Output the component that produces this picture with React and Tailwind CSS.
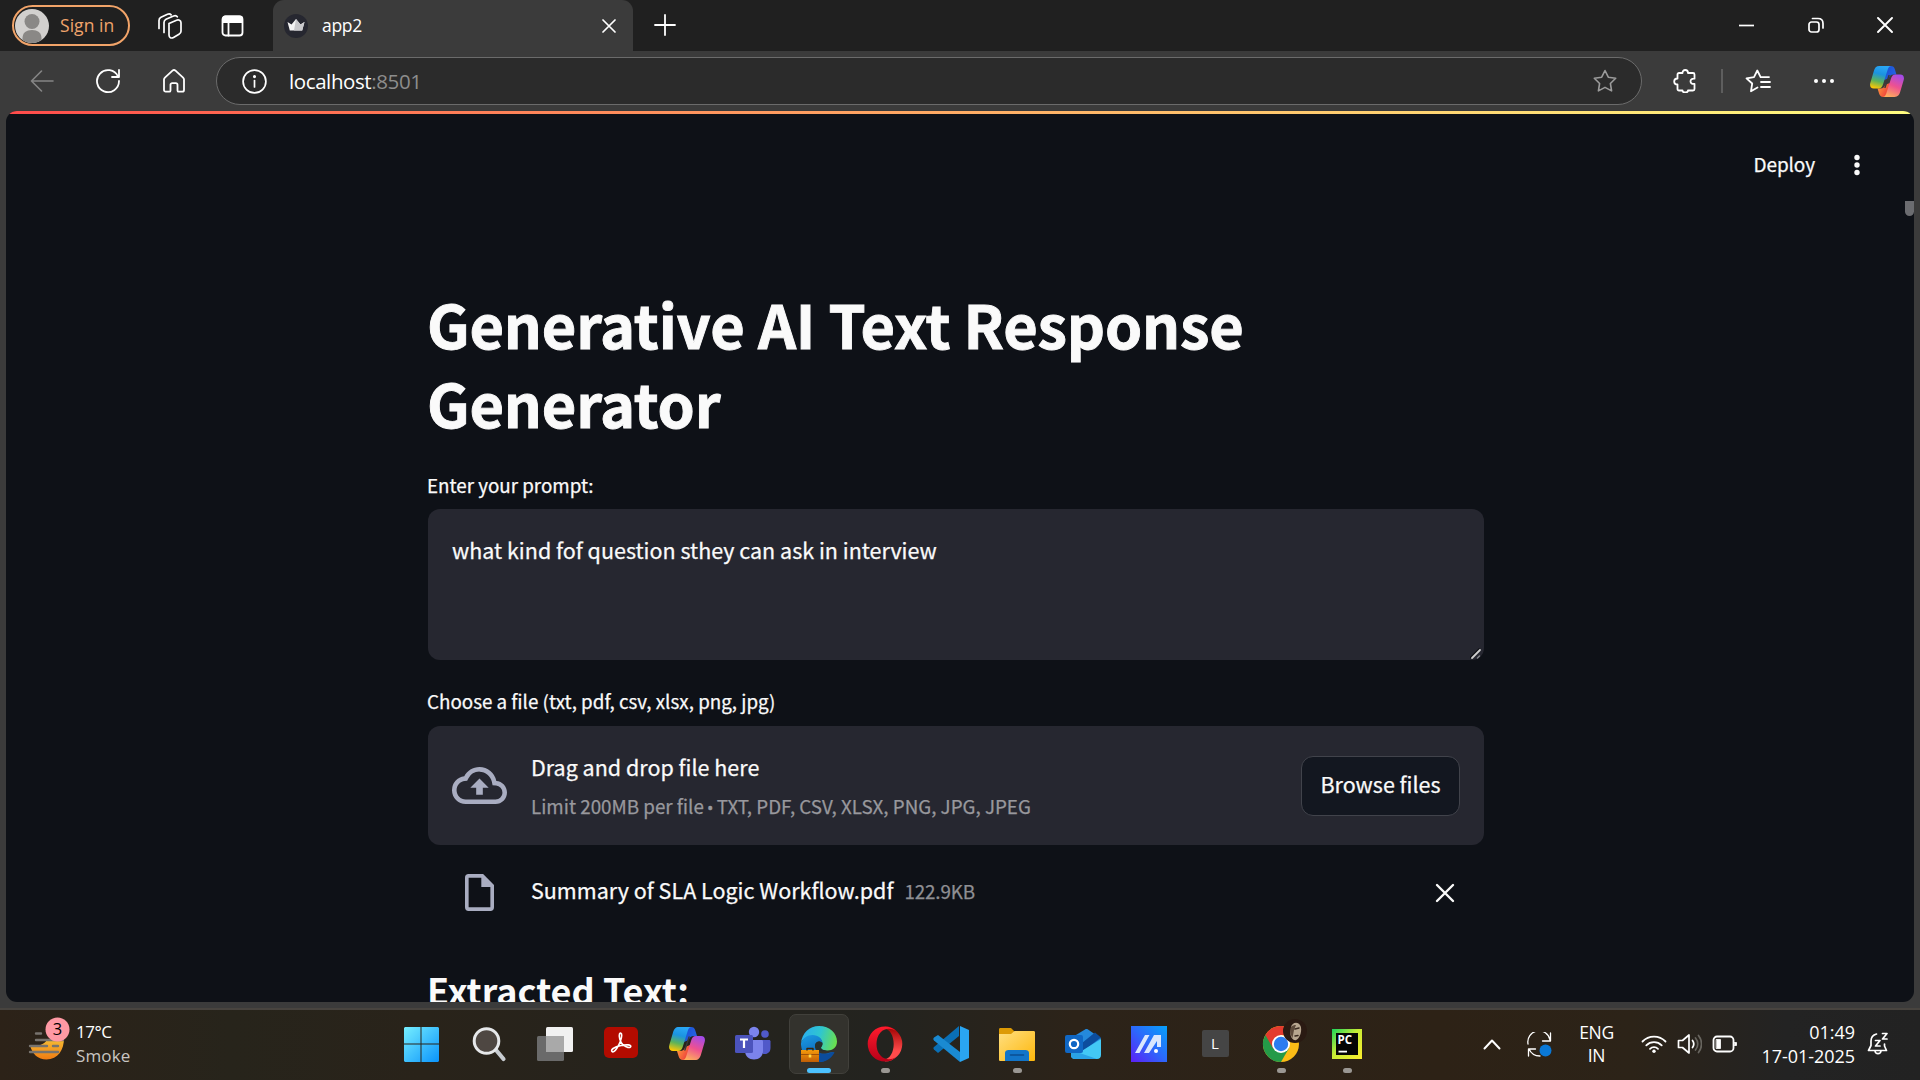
import React from "react";

const UI = "font-['Open_Sans','Noto_Sans',sans-serif]";
const PAGE = "font-['Noto_Sans_CJK_SC','Source_Sans_Pro',sans-serif]";

function Icon({ w, h, box, className = "", children, ...rest }) {
  return (
    <svg width={w} height={h || w} viewBox={box || `0 0 ${w} ${h || w}`} className={`block shrink-0 ${className}`} fill="none" stroke="currentColor" strokeLinecap="round" strokeLinejoin="round" {...rest}>
      {children}
    </svg>
  );
}

function Copilot({ id, w, h }) {
  return (
    <Icon w={w} h={h} box="0 0 36 33" stroke="none" preserveAspectRatio="none">
      <defs>
        <linearGradient id={`${id}a`} x1="0.55" y1="0" x2="0.3" y2="1">
          <stop offset="0" stopColor="#2aa7f5" /><stop offset="0.35" stopColor="#1b93e0" /><stop offset="0.68" stopColor="#5db35a" /><stop offset="1" stopColor="#fcc705" />
        </linearGradient>
        <linearGradient id={`${id}b`} x1="0.7" y1="0" x2="0.3" y2="1">
          <stop offset="0" stopColor="#a44be8" /><stop offset="0.5" stopColor="#ee5190" /><stop offset="1" stopColor="#fdae5c" />
        </linearGradient>
        <linearGradient id={`${id}c`} x1="0" y1="0" x2="1" y2="0.5">
          <stop offset="0" stopColor="#1a4ed0" /><stop offset="1" stopColor="#2463e4" />
        </linearGradient>
        <linearGradient id={`${id}d`} x1="0" y1="0" x2="1" y2="0.6">
          <stop offset="0" stopColor="#ffa63c" /><stop offset="1" stopColor="#ee3a3c" />
        </linearGradient>
      </defs>
      <path fill={`url(#${id}c)`} d="M16 0h6c2.500 0 3.600 1.200 4.300 3.400L28 9h-3c-3 0-4.400 1.500-5.200 4L15 15Z" />
      <path fill={`url(#${id}d)`} d="M20 33h-6c-2.500 0-3.600-1.200-4.300-3.400L8 24h3c3 0 4.400-1.500 5.200-4L21 18Z" />
      <path fill={`url(#${id}a)`} d="M10 0h12.500c-2 0-3 1.500-3.800 4L14 19c-1 3.200-2 5-5 5H4c-3.500 0-4.600-2.800-3.600-6.200L4 5.500C5 2 6.500 0 10 0Z" />
      <path fill={`url(#${id}b)`} d="M26 33H13.500c2 0 3-1.500 3.800-4L22 14c1-3.200 2-5 5-5h5c3.500 0 4.600 2.800 3.600 6.200L32 27.500C31 31 29.500 33 26 33Z" />
      <path d="M19.500 9.500 15 23.500h1.500L21 9.500Z" fill="#3a3a3a" />
    </Icon>
  );
}

function TabStrip() {
  return (
    <div className="flex h-[51px] shrink-0 bg-[#202020] text-white">
      <div className="flex w-[273px] shrink-0 items-center pl-3">
        <div className="flex h-[41px] w-[118px] items-center rounded-full border-2 border-[#f2a469] pl-px text-[#f0a46c]">
          <Icon w={34} stroke="none">
            <circle cx="17" cy="17" r="17" fill="#d2d0ce" />
            <circle cx="17" cy="12.500" r="7.500" fill="#8a8886" />
            <path d="M7.500 31c-.5-7 3.500-10 9.500-10s10 3 9.500 10c-5.500 4-13.500 4-19 0Z" fill="#8a8886" />
          </Icon>
          <span className="ml-[11px] whitespace-nowrap text-[17.500px] tracking-[0.05px]">Sign in</span>
        </div>
        <Icon w={26} className="ml-[27px]" strokeWidth="1.700">
          <path d="M12 10.500 19.500 7.200c2-.8 4.500 0 4.500 2.500v8.500c0 1.500-.7 2.300-2 3l-5.500 3.300c-2.300 1.200-4.500 0-4.500-2.500Z" />
          <path d="M7 19.500V9.500c0-1.600.7-2.500 2-3.200L16.500 3c1.500-.7 3-.4 3.800.8" />
          <path d="M2 15.500V7.500C2 6 2.600 5 4 4.300L10.500 1.300c1.300-.6 2.800-.4 3.600.6" />
        </Icon>
        <Icon w={23} h={22} className="ml-[38px]" strokeWidth="1.800">
          <rect x="1.500" y="1.500" width="20" height="19" rx="3" />
          <path d="M2 3.500C2 2 3 1.500 4.500 1.500h14c1.500 0 2.500.5 2.500 2V7H2Z" fill="currentColor" />
          <path d="M7.500 7v13.500" />
        </Icon>
      </div>
      <div className="flex w-[360px] shrink-0 items-center rounded-t-[11px] bg-[#3b3b3b] pl-[11px] pr-[17px]">
        <Icon w={24} stroke="none">
          <circle cx="12" cy="12" r="12" fill="#262730" />
          <path d="m3.500 8 4 2.500L12 5l4.500 5.500 4-2.500-2.300 8.500H5.800Z" fill="#f4f4f4" />
          <path d="m12 5 4.500 5.500 4-2.500-2.300 8.500H10Z" fill="#c9c9cc" />
        </Icon>
        <span className="ml-[14px] text-[17.500px] tracking-[-0.3px]">app2</span>
        <Icon w={14} className="ml-auto" strokeWidth="1.700"><path d="m1 1 12 12M13 1 1 13" /></Icon>
      </div>
      <div className="flex grow items-center pb-px pl-[21px] pr-[27px]">
        <Icon w={22} strokeWidth="1.800"><path d="M11 1v20M1 11h20" /></Icon>
        <Icon w={15} className="ml-auto" strokeWidth="1.700" strokeLinecap="butt"><path d="M0 7.500h15" /></Icon>
        <Icon w={16} className="ml-[54px]" strokeWidth="1.700">
          <rect x="1" y="5" width="10" height="10" rx="2.500" />
          <path d="M4.500 1.500H10c3 0 5 2 5 5V11" />
        </Icon>
        <Icon w={16} className="ml-[53px]" strokeWidth="1.900"><path d="m1 1 14 14M15 1 1 15" /></Icon>
      </div>
    </div>
  );
}

const STAR = "m12 1.500 3.300 6.700 7.400 1.100-5.300 5.200 1.200 7.400-6.600-3.500-6.600 3.500 1.200-7.400L1.300 9.300l7.400-1.100Z";

function Toolbar() {
  return (
    <div className="flex h-[60px] shrink-0 items-center bg-[#3b3b3b] text-white">
      <Icon w={24} className="ml-[30px] text-[#858585]" strokeWidth="1.600"><path d="M23 12H1.500M11.500 2 1.500 12l10 10" /></Icon>
      <Icon w={26} className="ml-[41px]" strokeWidth="1.800"><path d="M23 8.500A11 11 0 1 0 24 13M24 2v7h-7" /></Icon>
      <Icon w={24} className="ml-[41px]" strokeWidth="1.800">
        <path d="M2 10.500c0-.8.300-1.300.9-1.900l7.600-6.900c.9-.8 2.100-.8 3 0l7.600 6.900c.6.600.9 1.100.9 1.900V21c0 1-.7 1.700-1.700 1.700h-3.500c-.8 0-1.300-.5-1.300-1.300v-5.600c0-1-.7-1.700-1.700-1.700h-3.600c-1 0-1.700.7-1.700 1.700v5.600c0 .8-.5 1.300-1.300 1.300H3.700c-1 0-1.700-.7-1.700-1.700Z" />
      </Icon>
      <div className="ml-[30px] flex h-12 w-[1426px] items-center rounded-full border-[1.500px] border-[#6b6b6b] bg-[#2b2b2b] pl-[25px] pr-6">
        <Icon w={25} strokeWidth="1.700">
          <circle cx="12.500" cy="12.500" r="11.400" /><path d="M12.500 11.500v6.500" /><circle cx="12.500" cy="7.600" r=".7" fill="currentColor" />
        </Icon>
        <span className="ml-[22px] text-[20.500px] tracking-[-0.4px]">localhost<span className="text-[#8d8d8d]">:8501</span></span>
        <Icon w={24} className="ml-auto text-[#9b9b9b]" strokeWidth="1.600"><path d={STAR} /></Icon>
      </div>
      <Icon w={24} className="ml-[31px]" strokeWidth="1.800">
        <path d="M4.500 5.500c0-.9.600-1.500 1.500-1.500h3.500c0-1.800 1-3 2.700-3S15 2.200 15 4h5c.9 0 1.500.6 1.500 1.500v4.200c-2.500-.3-4 .7-4 2.600s1.500 2.900 4 2.600V20c0 .9-.6 1.500-1.500 1.500h-5c0 1.300-1 2-2.800 2s-2.700-.7-2.700-2H6c-.9 0-1.500-.6-1.500-1.500v-4.500c-2 0-3.300-1.200-3.300-3s1.300-3 3.300-3Z" />
      </Icon>
      <div className="ml-[24px] h-6 w-0.5 bg-[#5e5e5e]" />
      <Icon w={26} h={24} className="ml-[22px]" strokeWidth="1.800">
        <path d="M12.500 18.500 6 22.200l1.200-7.700L1.500 9.300l7.500-1.100L12.300 1.500l3.300 6.600h8.400M16 13h9M16 18h9" />
      </Icon>
      <Icon w={22} h={4} className="ml-[42px]" stroke="none" fill="currentColor">
        <circle cx="3" cy="2" r="2" /><circle cx="11" cy="2" r="2" /><circle cx="19" cy="2" r="2" />
      </Icon>
      <div className="ml-[35px]"><Copilot id="tb" w={34} h={31} /></div>
    </div>
  );
}

function Page() {
  return (
    <div className={`flex h-[891px] shrink-0 flex-col overflow-hidden rounded-[11px] bg-[#0e1117] text-[#fafafa] [-webkit-text-stroke:0.25px] ${PAGE}`}>
      <div className="h-[3px] shrink-0 bg-gradient-to-r from-[#ff4b4b] to-[#fffd80]" />
      <div className="flex h-[87px] shrink-0 items-start justify-end">
        <div className="mt-[37px] flex h-7 items-center pr-[54px]">
          <span className="-mt-0.5 text-[19px] leading-7 tracking-[-0.1px]">Deploy</span>
          <Icon w={6} h={22} className="ml-[39px]" stroke="none" fill="currentColor">
            <circle cx="3" cy="3.500" r="2.700" /><circle cx="3" cy="11" r="2.700" /><circle cx="3" cy="18.500" r="2.700" />
          </Icon>
        </div>
      </div>
      <div className="h-[15px] w-[9px] shrink-0 self-end rounded-b-[5px] bg-[#6b6c70]" />
      <div className="ml-[422px] w-[1056px] pt-[68px]">
        <h1 className="-ml-px h-[158px] text-[59.500px] font-bold leading-[79px] tracking-[-0.2px] [-webkit-text-stroke:0.9px]">
          Generative AI Text Response<br />Generator
        </h1>
        <div className="mt-[29px] h-7 text-[18.800px] leading-7 -ml-px">Enter your prompt:</div>
        <div className="mt-[10px] flex h-[151px] flex-col justify-between rounded-[12px] bg-[#262730]">
          <div className="pl-6 pt-[23px] text-[21.500px] leading-9">what kind fof question sthey can ask in interview</div>
          <Icon w={12} className="mr-0.5 self-end" strokeWidth="1.500">
            <path d="M.5 9.500 9 1" stroke="#0b0c10" /><path d="M2 10 10 2" stroke="#d0d0d0" strokeWidth="1.800" /><path d="m7.500 10 2-2" stroke="#85868a" />
          </Icon>
        </div>
        <div className="-ml-px mt-[27px] h-7 text-[18.800px] leading-7">Choose a file (txt, pdf, csv, xlsx, png, jpg)</div>
        <div className="mt-[11px] flex h-[119px] items-center rounded-[12px] bg-[#262730] px-6">
          <Icon w={55} h={37} box="0 4 24 16" stroke="none" fill="#a9adc1" preserveAspectRatio="none">
            <path d="M19.350 10.040A7.490 7.490 0 0 0 12 4C9.110 4 6.600 5.640 5.350 8.040A5.994 5.994 0 0 0 0 14c0 3.310 2.690 6 6 6h13c2.760 0 5-2.240 5-5 0-2.640-2.050-4.780-4.650-4.960zM19 18H6c-2.210 0-4-1.790-4-4 0-2.050 1.530-3.760 3.560-3.970l1.070-.11.5-.95A5.469 5.469 0 0 1 12 6c2.620 0 4.880 1.860 5.390 4.430l.3 1.500 1.530.11A2.980 2.980 0 0 1 22 15c0 1.650-1.350 3-3 3zM8 13h2.550v3h2.900v-3H16l-4-4-4 4z" />
          </Icon>
          <div className="ml-6 flex flex-col gap-[5px]">
            <span className="h-9 text-[21.500px] leading-9">Drag and drop file here</span>
            <span className="h-8 text-[18.800px] leading-8 text-[#98989d]">Limit 200MB per file <span className="-mx-px font-['Noto_Sans',sans-serif] text-[17px] leading-none">•</span> TXT, PDF, CSV, XLSX, PNG, JPG, JPEG</span>
          </div>
          <button className="ml-auto h-[60px] w-[159px] rounded-[12px] border-[1.500px] border-[#41434b] bg-[#131720] pb-0.5 text-[21.500px]">Browse files</button>
        </div>
        <div className="mt-[22px] flex h-[50px] items-center pl-[37px] pr-[29px]">
          <Icon w={29} h={37} box="4 2 16 20" className="mt-px" stroke="none" fill="#a9adc1" preserveAspectRatio="none">
            <path d="M6 2a2 2 0 0 0-2 2v16a2 2 0 0 0 2 2h12a2 2 0 0 0 2-2V8l-6-6H6zm0 2h7v5h5v11H6V4z" />
          </Icon>
          <span className="-mt-1 ml-[37px] text-[21.500px] leading-9">Summary of SLA Logic Workflow.pdf</span>
          <span className="-mt-[3px] ml-[11px] text-[18.800px] leading-9 tracking-[-0.1px] text-[#8e8f93]">122.9KB</span>
          <Icon w={20} className="ml-auto mt-0.5" strokeWidth="2.400"><path d="m2 2 16 16M18 2 2 18" /></Icon>
        </div>
        <h3 className="-ml-px mt-[44px] h-12 whitespace-nowrap text-[36px] font-bold leading-[56px] [-webkit-text-stroke:0px]">Extracted Text:</h3>
      </div>
    </div>
  );
}

function Dot({ active }) {
  return <div className={active ? "h-[5px] w-6 rounded-full bg-[#4cc2ff]" : "h-[5px] w-[9px] rounded-full bg-[#9a9793]"} />;
}

function TaskItem({ children, active, dot }) {
  return (
    <div className="flex w-[66px] shrink-0 justify-center">
      <div className={active ? "flex h-[60px] w-[60px] flex-col items-center rounded-[7px] border border-[#41403b] bg-[#33322d]" : "flex h-[60px] w-[60px] flex-col items-center pt-px"}>
        <div className="flex h-[54px] items-center pt-[3px]">
          <div className="flex h-9 w-9 items-center justify-center">{children}</div>
        </div>
        {(active || dot) && <div className="-mt-px"><Dot active={active} /></div>}
      </div>
    </div>
  );
}

function TaskbarApps() {
  return (
    <div className="flex items-start pt-1">
      <TaskItem>
        <Icon w={36} stroke="none" className="-ml-1">
          <defs><linearGradient id="win" x1="0" y1="0" x2="36" y2="36" gradientUnits="userSpaceOnUse"><stop stopColor="#79f1ff" /><stop offset="1" stopColor="#0a93fb" /></linearGradient></defs>
          <path fill="url(#win)" d="M2 1h15.500v16.500H1V2ZM18.500 1H35l1 1v15.500H18.500ZM1 18.500h16.500V36H2l-1-1ZM18.500 18.500H36V35l-1 1H18.500Z" />
        </Icon>
      </TaskItem>
      <TaskItem>
        <Icon w={36} >
          <path d="m25 24 7.500 9" stroke="#c8ccd1" strokeWidth="4.200" />
          <circle cx="15.500" cy="15" r="12.300" fill="#4e4742" stroke="#e6e8ea" strokeWidth="3" />
        </Icon>
      </TaskItem>
      <TaskItem>
        <Icon w={36} stroke="none">
          <rect x="9" y="1" width="27" height="25" rx="1.500" fill="#f1f1f1" />
          <rect x="0" y="10" width="27" height="25" rx="1.500" fill="#6a6a6a" />
          <path d="M9 10h18v16H9Z" fill="#a9a9a9" />
        </Icon>
      </TaskItem>
      <TaskItem>
        <Icon w={34} className="-mt-0.5">
          <rect x="0" y="1" width="34" height="31" rx="5" fill="#b30b00" stroke="none" />
          <path d="M8 25.500c-1.500-1.500 1.500-4.500 9-6 6-1.200 10-.7 9.800 1-.3 2-4.800 1-8-2-3-2.800-4-8.500-3.300-10.500.6-1.500 2.300-1 2.200 1.500-.2 4-2.500 9-4.700 12.500-2 3.200-4 4.500-5 3.500Z" stroke="#fff" strokeWidth="1.600" />
        </Icon>
      </TaskItem>
      <TaskItem><Copilot id="tk" w={36} h={33} /></TaskItem>
      <TaskItem>
        <Icon w={36} stroke="none">
          <circle cx="30" cy="8" r="3.800" fill="#5059c9" /><circle cx="19" cy="6" r="5.200" fill="#7b83eb" />
          <path d="M25 14h9c1 0 1.500.6 1.500 1.500V22c0 3.600-2.500 6-5.500 6s-5-2-5-5Z" fill="#5059c9" />
          <path d="M10 14h16.500c1 0 1.500.6 1.500 1.500V25c0 5-4 8.500-9 8.500S10 30 10 25Z" fill="#7b83eb" />
          <rect x="0" y="9" width="18" height="18" rx="1.500" fill="#4b53bc" />
          <path d="M5 13.500h8M9 13.500V22" stroke="#fff" strokeWidth="2.200" strokeLinecap="butt" />
        </Icon>
      </TaskItem>
      <TaskItem active>
        <Icon w={36} stroke="none">
          <defs>
            <linearGradient id="eg1" x1="0" y1="0.4" x2="1" y2="0.6"><stop stopColor="#2aaef0" /><stop offset=".5" stopColor="#2fc6cf" /><stop offset="1" stopColor="#6be04c" /></linearGradient>
            <linearGradient id="eg2" x1="0" y1="0" x2="0.5" y2="1"><stop stopColor="#1b9de4" /><stop offset="1" stopColor="#0a5ab0" /></linearGradient>
            <linearGradient id="eg3" x1="0" y1="0" x2="0" y2="1"><stop stopColor="#f59b0c" /><stop offset="1" stopColor="#c05e06" /></linearGradient>
          </defs>
          <path d="M0 17C1 7 8.500 0 18 0c11 0 18 7.500 18 15.500 0 6-4.500 9-9.500 9-4 0-6.500-1.300-6.500-2.800 0-1 1.500-1.700 1.500-4 0-4-4-7.700-9-7.700C6.500 10 1.500 13 0 17Z" fill="url(#eg1)" />
          <path d="M0 17C2 12 6 9 11.500 9c6 0 10 4 10 8.500-2-3-7-2.500-7.500 2C13.500 26 20 30 29 26.500c2-.8 4.300-1 3 .9C29 32 24 36 18 36 8 36-.5 28 0 17Z" fill="url(#eg2)" />
          <path d="M14 19.500c.5-4.500 5.500-5 7.500-2 0 2.500-1.500 3.200-1.500 4.200 0 1.500 2.500 2.800 6.500 2.800-5 1.500-12.500.5-12.500-5Z" fill="#26302f" />
          <path d="M17 26c4 2.500 9 2.300 14 .2 2-.7 3-.2 2 1.300C30 32.500 24.500 36 18 36Z" fill="#0b4c9c" />
          <rect x="0" y="24" width="18" height="12" fill="url(#eg3)" /><path d="M0 28.500h18" stroke="#8b4407" strokeWidth=".8" />
          <path d="M6 24v-1.500h6V24" stroke="#3a2208" strokeWidth="1.400" /><rect x="7.700" y="28.500" width="2.600" height="3" fill="#ffd94a" />
        </Icon>
      </TaskItem>
      <TaskItem dot>
        <Icon w={36} stroke="none">
          <defs>
            <linearGradient id="op1" x1="0" y1="0" x2="0" y2="1"><stop stopColor="#ff1b2d" /><stop offset="1" stopColor="#b80018" /></linearGradient>
            <linearGradient id="op2" x1="0" y1="0" x2="0" y2="1"><stop stopColor="#9c0000" /><stop offset=".7" stopColor="#ff4b4b" /></linearGradient>
          </defs>
          <path fillRule="evenodd" fill="url(#op2)" d="M18 .5a17.300 17.500 0 0 1 0 35Zm0 2.500v30c4.700 0 8.700-6.700 8.700-15S22.700 3 18 3Z" />
          <path fillRule="evenodd" fill="url(#op1)" d="M18 .5a17.300 17.500 0 1 0 0 35c4.500 0 8-1.500 11-4.500-5 3.300-11.500 3-15.500-1.500C10.500 26.500 9.500 22 9.500 18s1-8.500 4-11.500C17.500 2 24 1.700 29 5 26 2 22.500.5 18 .5Z" />
        </Icon>
      </TaskItem>
      <TaskItem>
        <Icon w={36} stroke="none">
          <path d="M26 0v10L5 27l-4-3.500c-.8-.8-.8-1.600 0-2.400Z" fill="#0a6fb5" />
          <path d="M1 11.500 5 9l22 17v10L1 14.500c-.9-.9-.9-2 0-3Z" fill="#1a8ad2" />
          <path d="M27 0 36 4v28l-9 4Z" fill="#2aa5f2" />
        </Icon>
      </TaskItem>
      <TaskItem dot>
        <Icon w={36} stroke="none">
          <defs><linearGradient id="fo" x1="0" y1="0" x2="1" y2="1"><stop stopColor="#ffdf80" /><stop offset="1" stopColor="#fdb70c" /></linearGradient></defs>
          <path d="M0 3.500C0 2.500.5 2 1.500 2H11c1 0 1.500.3 2 1l2 2v4H0Z" fill="#dd9a05" />
          <path d="M0 8h12l3.500-3H34.500c1 0 1.500.5 1.500 1.500V33.500c0 1-.5 1.500-1.500 1.500h-33C.5 35 0 34.500 0 33.500Z" fill="url(#fo)" />
          <path d="M6 35v-8c0-2 1.500-3 3.500-3h17c2 0 3.500 1 3.500 3v8Z" fill="#1275c9" /><path d="M11.500 29h13" stroke="#0b4d91" strokeWidth="1.600" />
        </Icon>
      </TaskItem>
      <TaskItem>
        <Icon w={36} stroke="none">
          <path d="M6 12 20 3.500c1-.6 2-.6 3 0l13 9L24 30H8Z" fill="#2489dc" />
          <path d="M17 17 30 6.500l6 5L18 25Z" fill="#0c4d9e" />
          <path d="M15 26 36 13v16c0 2.500-1.500 4-4 4H10c-2.500 0-4-1.500-4-3Z" fill="#43c8f5" /><path d="m6 24 26 9H10c-2.500 0-4-1.500-4-3Z" fill="#2aa2e6" />
          <rect x="0" y="9" width="18" height="18" rx="2" fill="#1067c4" /><circle cx="9" cy="18" r="4.200" stroke="#fff" strokeWidth="2.200" />
        </Icon>
      </TaskItem>
      <TaskItem>
        <Icon w={36} stroke="none">
          <defs><linearGradient id="ma" x1="0" y1="1" x2="1" y2="0"><stop stopColor="#5d1ff5" /><stop offset=".5" stopColor="#2c68fb" /><stop offset="1" stopColor="#06a2fb" /></linearGradient></defs>
          <path d="M0 0h36v36H0Z" fill="url(#ma)" />
          <path d="m4 27 10-18h4.500L8.500 27ZM13 27 23 9h7v12h-4v-6L18 27Z" fill="#d9e6fe" /><circle cx="25" cy="25" r="2" fill="#fff" />
        </Icon>
      </TaskItem>
      <TaskItem>
        <div className="flex h-[27px] w-[27px] items-center justify-center rounded-[2px] bg-[#454545] text-[15px] leading-none text-white">L</div>
      </TaskItem>
      <TaskItem dot>
        <Icon w={36} stroke="none" className="overflow-visible">
          <circle cx="18" cy="18" r="18" fill="#fbbc16" />
          <path d="M18 18 2.400 9A18 18 0 0 0 18 36l7.800-13.500Z" fill="#249a48" />
          <path d="M18 18 10.200 22.500 2.400 9A18 18 0 0 1 33.600 9H18Z" fill="#e33b2e" />
          <circle cx="18" cy="18" r="9" fill="#fff" /><circle cx="18" cy="18" r="7.200" fill="#2c7cf0" />
          <circle cx="32" cy="5" r="12" fill="#2a1a12" />
          <path d="M28 1c1-4 6-6 9-2 1.500 2 1.500 6 .5 9s-3 6-5 6.300C29 14 27 10 27.500 6Z" fill="#b8a68f" />
          <path d="M28 1c1.500-1.500 3-2 5-2l-2 5-1.500 8C28 10 27 7 27.500 5Z" fill="#5e4a3b" />
          <path d="m32 3 4-1M32 10l3-.5" stroke="#3a2a20" strokeWidth="1.500" />
        </Icon>
      </TaskItem>
      <TaskItem dot>
        <Icon w={30} stroke="none">
          <defs><linearGradient id="pc" x1="0" y1="0" x2="1" y2="1"><stop stopColor="#18d45c" /><stop offset=".45" stopColor="#c6ec35" /><stop offset="1" stopColor="#fced2e" /></linearGradient></defs>
          <path d="M0 0h30v30H0Z" fill="url(#pc)" /><path d="M4 4h22v22H4Z" fill="#050505" />
          <text x="5.600" y="15" fontSize="11.500" fontWeight="700" fill="#fff" fontFamily="Open Sans">PC</text><path d="M6.500 21.700h8.500v1.800H6.500Z" fill="#fff" />
        </Icon>
      </TaskItem>
    </div>
  );
}

function Taskbar() {
  return (
    <div className="flex h-[70px] shrink-0 bg-[linear-gradient(90deg,#2c2218_0%,#27241b_12%,#29231a_22%,#25231d_36%,#23231f_46%,#2c2319_56%,#2d2216_75%,#2c2318_85%,#232323_93%,#222_100%)] text-white">
      <div className="flex w-[390px] shrink-0 items-start pl-[28px] pt-[6px]">
        <Icon w={43} h={46}>
          <defs><linearGradient id="wx" x1="0" y1="0" x2="0" y2="1"><stop stopColor="#f6c136" /><stop offset="1" stopColor="#f07b12" /></linearGradient></defs>
          <path d="M2 29c4 2 13 1 17-5l17-2c0 12-6 21.500-17.500 21.500C10 43.500 4 38 2 29Z" fill="url(#wx)" stroke="none" />
          <path d="M8 17.500h5M8 24h27M2 30h17M25 30h5M2 36h28" stroke="#77736e" strokeWidth="2.400" />
          <circle cx="29.500" cy="13.500" r="12" fill="#ff99a4" stroke="none" />
          <text x="29.500" y="18.800" textAnchor="middle" fontSize="16.500" fill="#000" stroke="none" fontFamily="Open Sans">3</text>
        </Icon>
        <div className="ml-[5px] mt-[4px] text-[17px] leading-6 tracking-[-0.5px]">
          <div>17°C</div><div className="tracking-[0.15px] text-[#c9c6c2]">Smoke</div>
        </div>
      </div>
      <TaskbarApps />
      <div className="flex h-[68px] grow items-center justify-end pr-[31px]">
        <Icon w={18} h={12} strokeWidth="2"><path d="m1.500 10.500 7.500-8 7.500 8" /></Icon>
        <Icon w={25} className="ml-[26px]" strokeWidth="1.300">
          <path d="M1 12A11 11 0 0 1 23 8M23.500 1v8h-8M1.500 24v-7h7M2 17c2 4.500 6 7 11 7" /><circle cx="18.500" cy="18.500" r="6" fill="#0a78d6" stroke="none" />
        </Icon>
        <div className="ml-[26px] w-[37px] text-center text-[17.500px] leading-[23px] tracking-[-0.3px]"><div>ENG</div><div>IN</div></div>
        <Icon w={26} h={20} className="ml-[26px]" strokeWidth="1.800">
          <path d="M1.500 7.500a16 16 0 0 1 23 0M5.300 11.300a10.800 10.800 0 0 1 15.400 0M9 14.800a5.700 5.700 0 0 1 8 0" /><circle cx="13" cy="17.300" r="1.700" fill="currentColor" stroke="none" />
        </Icon>
        <Icon w={25} h={22} className="ml-[10px]" strokeWidth="1.700">
          <path d="M1.500 7.500h4l6.500-5.500v18l-6.500-5.500h-4ZM15.500 7.500c1.500 2 1.500 5 0 7" /><path d="M18.500 5c3 3.500 3 8.500 0 12M21.500 2.500c4 5 4 12 0 17" stroke="#68655f" />
        </Icon>
        <Icon w={26} h={18} className="ml-[10px]" strokeWidth="1.800">
          <rect x="1.500" y="1.500" width="20" height="15" rx="3.500" /><path d="M4.500 4.500h4v9h-4ZM22.500 7.500h2v3h-2Z" fill="currentColor" strokeWidth=".8" />
        </Icon>
        <div className="ml-[20px] w-[97px] whitespace-nowrap text-right text-[18px] leading-6 tracking-[-0.05px]"><div>01:49</div><div>17-01-2025</div></div>
        <Icon w={22} h={24} className="ml-[12px]" strokeWidth="1.700">
          <path d="M9.500 2C5.800 3 4 5.800 4 9v4.500L1.500 18.500h18L17.500 14v-2M8 19c.5 3.500 5.500 3.500 6 0" />
          <path d="M8.500 8.500h4.500l-4.500 5.500h4.500M15.500 1.500h4.500l-4.500 5.500h4.500" strokeWidth="1.700" />
        </Icon>
      </div>
    </div>
  );
}

export default function App() {
  return (
    <div className={`flex h-[1080px] w-[1920px] flex-col overflow-hidden bg-[#3b3b3b] ${UI}`}>
      <TabStrip />
      <Toolbar />
      <div className="h-[899px] shrink-0 border-b-2 border-[#48443f] px-[6px]">
        <Page />
      </div>
      <Taskbar />
    </div>
  );
}
